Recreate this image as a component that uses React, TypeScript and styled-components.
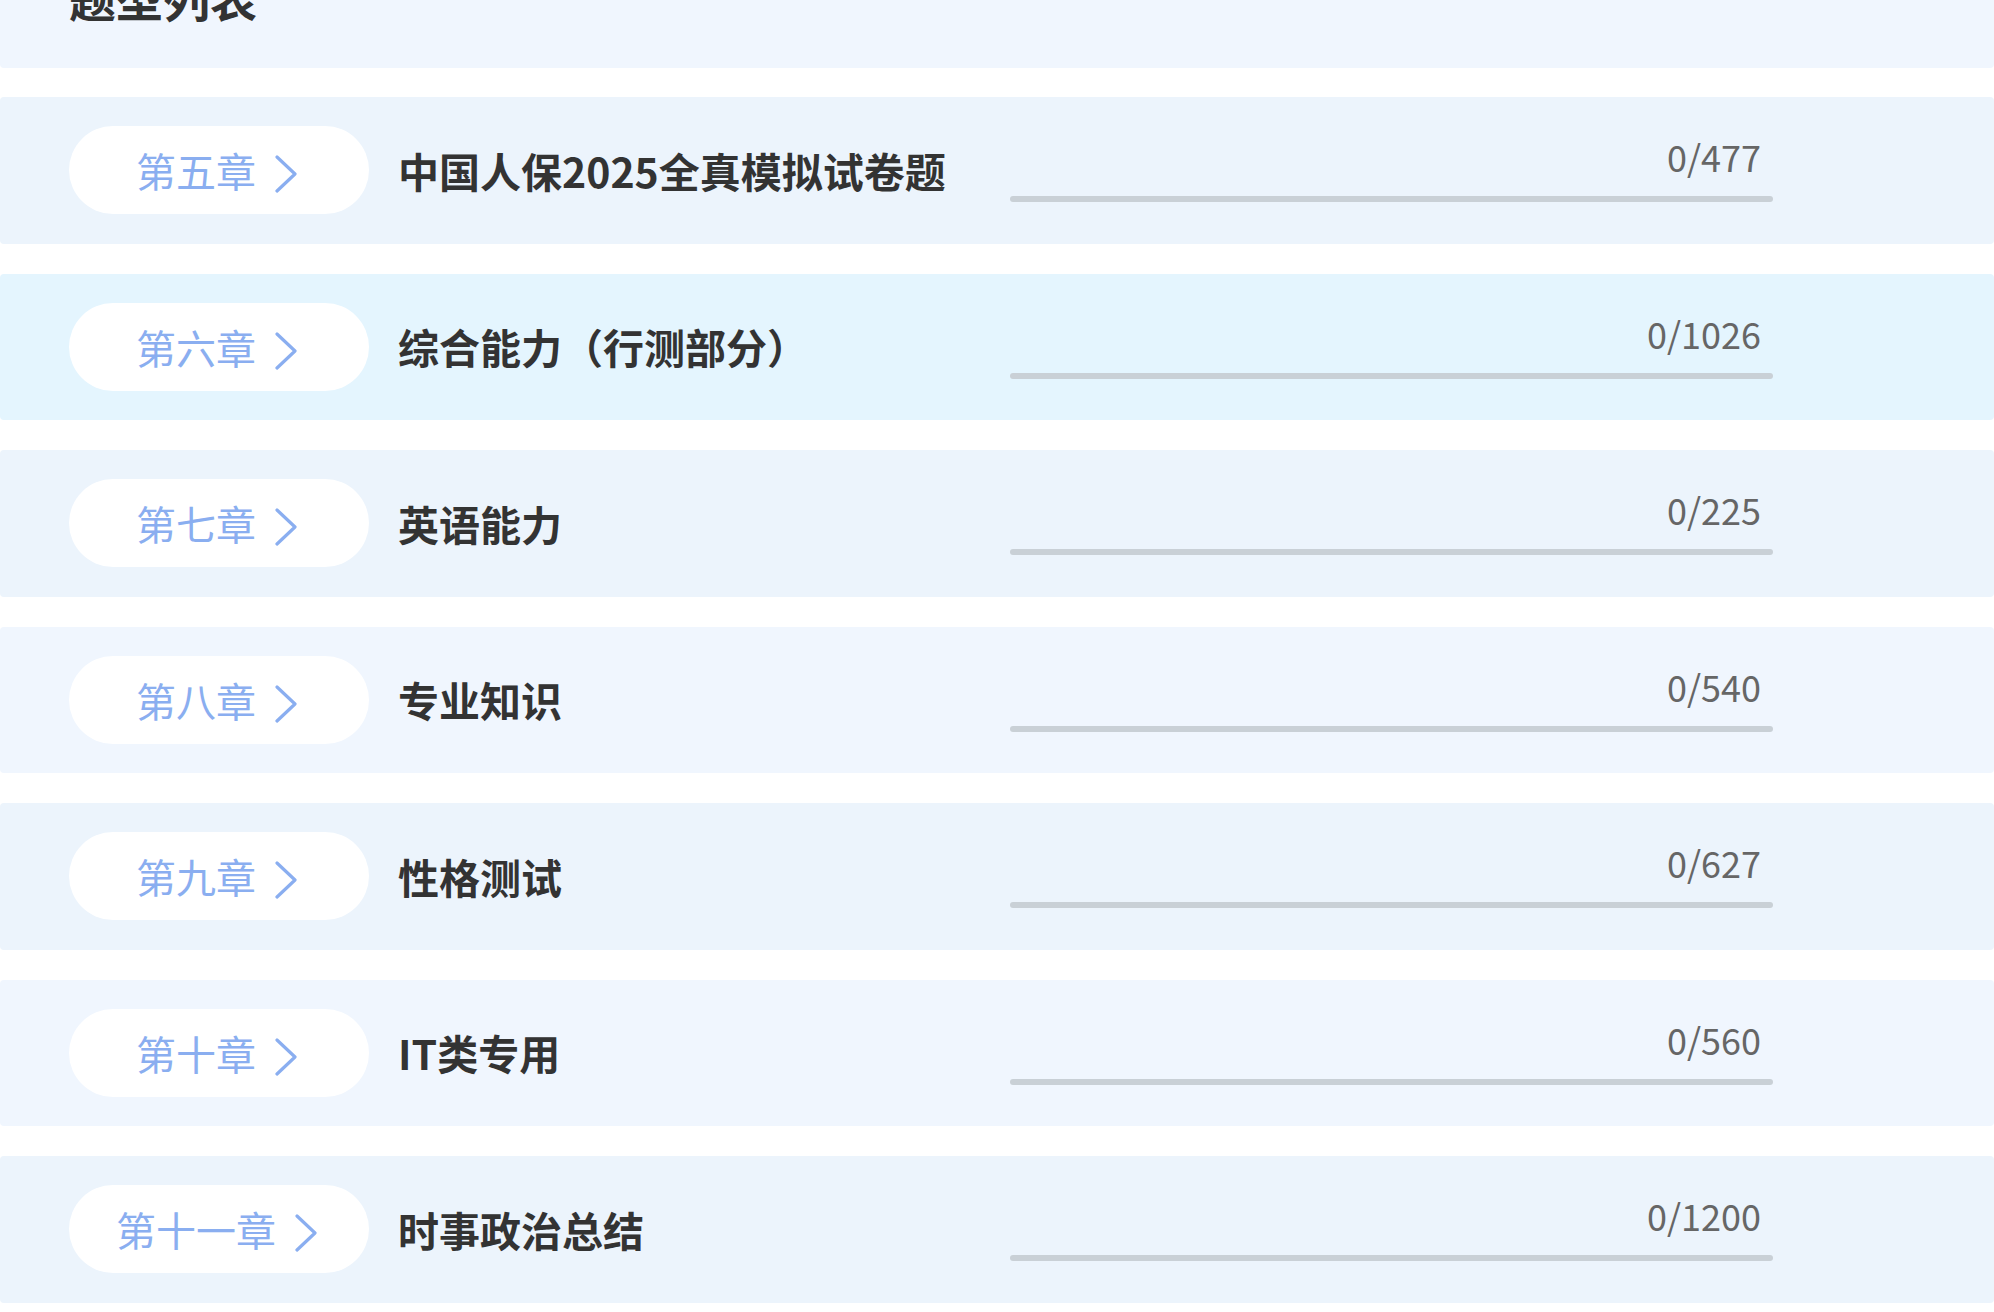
import React from "react";
import styled, { createGlobalStyle } from "styled-components";

const Global = createGlobalStyle`
  html, body {
    margin: 0;
    padding: 0;
    background: #ffffff;
    font-family: "Noto Sans CJK SC", "Noto Sans", sans-serif;
  }
  #root { overflow: hidden; }
`;

const Page = styled.div`
  display: flex;
  flex-direction: column;
  gap: 29px;
  padding-bottom: 10px;
`;

const Header = styled.div`
  display: flex;
  height: 68px;
  background: #f0f6fe;
  border-radius: 0 0 4px 4px;
  padding-left: 69px;
  overflow: hidden;
`;

const HeaderTitle = styled.h1`
  margin: -27px 0 0 0;
  font-size: 47px;
  line-height: 48px;
  font-weight: 700;
  color: #333333;
  height: 48px;
`;

const List = styled.div`
  display: flex;
  flex-direction: column;
  gap: 30px;
`;

const Row = styled.div<{ $bg: string }>`
  display: flex;
  align-items: center;
  height: 146.5px;
  background: ${(p) => p.$bg};
  border-radius: 4px;
  padding: 0 221px 0 69px;
  box-sizing: border-box;
`;

const ChapterPill = styled.div`
  flex: none;
  width: 300px;
  height: 88px;
  border-radius: 44px;
  background: #ffffff;
  display: flex;
  align-items: center;
  justify-content: center;
  gap: 19px;
  color: #8aaef0;
  font-size: 40px;
  line-height: 40px;
  font-weight: 400;
`;

const Chevron = styled.svg`
  flex: none;
  margin-top: 8px;
  margin-right: 4px;
`;

const Title = styled.div`
  flex: 1;
  margin-left: 29px;
  font-size: 41px;
  line-height: 41px;
  font-weight: 700;
  color: #333333;
  white-space: nowrap;
`;

const Progress = styled.div`
  flex: none;
  width: 763px;
  align-self: flex-start;
  padding-top: 41px;
  display: flex;
  flex-direction: column;
`;

const Count = styled.div`
  text-align: right;
  padding-right: 12px;
  font-size: 36px;
  line-height: 36px;
  color: #666666;
`;

const Track = styled.div`
  margin-top: 22px;
  height: 6px;
  border-radius: 3px;
  background: #c9d0d6;
  overflow: hidden;
`;

const Fill = styled.div`
  height: 100%;
  background: #8aaef0;
`;

type Item = { chapter: string; title: string; done: number; total: number; bg: string };

const items: Item[] = [
  { chapter: "第五章", title: "中国人保2025全真模拟试卷题", done: 0, total: 477, bg: "#ecf4fc" },
  { chapter: "第六章", title: "综合能力（行测部分）", done: 0, total: 1026, bg: "#e4f5fe" },
  { chapter: "第七章", title: "英语能力", done: 0, total: 225, bg: "#ecf4fc" },
  { chapter: "第八章", title: "专业知识", done: 0, total: 540, bg: "#f0f6fe" },
  { chapter: "第九章", title: "性格测试", done: 0, total: 627, bg: "#ecf4fc" },
  { chapter: "第十章", title: "IT类专用", done: 0, total: 560, bg: "#f0f6fe" },
  { chapter: "第十一章", title: "时事政治总结", done: 0, total: 1200, bg: "#ecf4fc" },
];

const ChevronIcon = () => (
  <Chevron width="23" height="38" viewBox="0 0 23 38">
    <polyline
      points="2,2 20,19 2,36"
      fill="none"
      stroke="#8aaef0"
      strokeWidth="3.2"
      strokeLinecap="round"
      strokeLinejoin="round"
    />
  </Chevron>
);

export default function App() {
  return (
    <>
      <Global />
      <Page>
        <Header>
          <HeaderTitle>题型列表</HeaderTitle>
        </Header>
        <List>
          {items.map((it) => (
            <Row key={it.chapter} $bg={it.bg}>
              <ChapterPill>
                <span>{it.chapter}</span>
                <ChevronIcon />
              </ChapterPill>
              <Title>{it.title}</Title>
              <Progress>
                <Count>
                  {it.done}/{it.total}
                </Count>
                <Track>
                  <Fill style={{ width: `${(it.done / it.total) * 100}%` }} />
                </Track>
              </Progress>
            </Row>
          ))}
        </List>
      </Page>
    </>
  );
}
